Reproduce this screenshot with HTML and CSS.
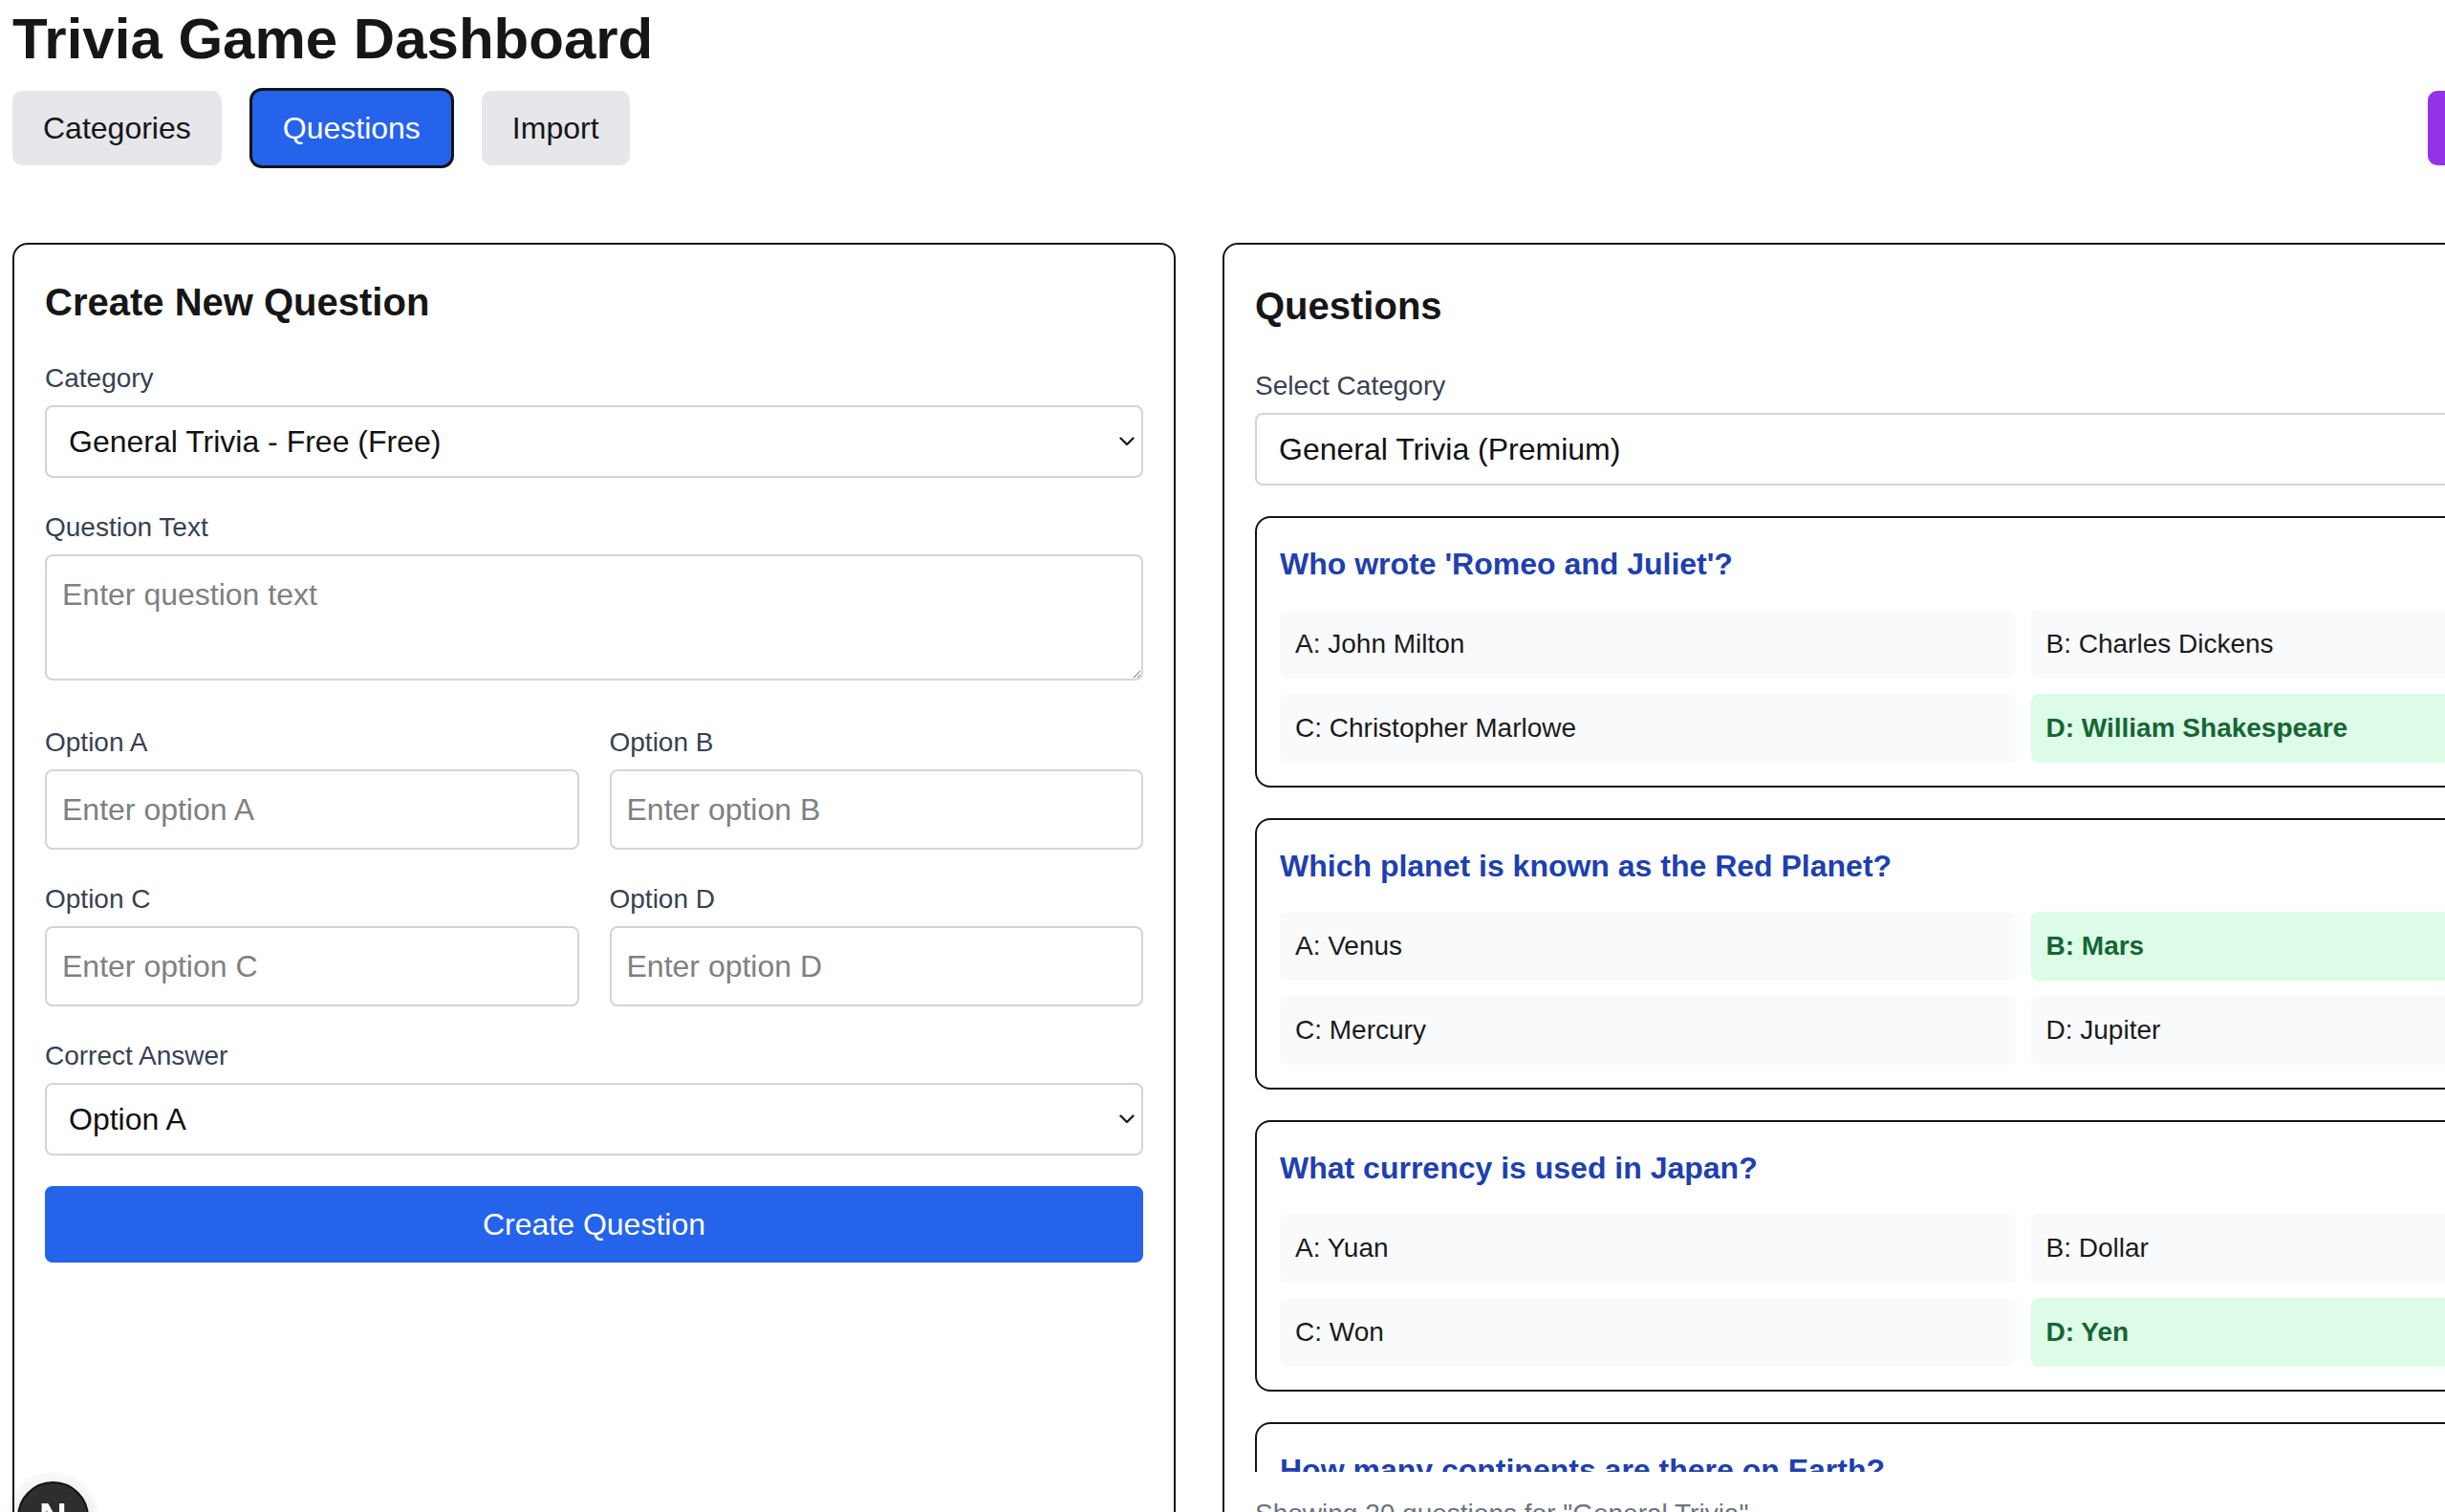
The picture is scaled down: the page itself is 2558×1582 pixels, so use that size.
FILE: index.html
```html
<!DOCTYPE html>
<html lang="en">
<head>
<meta charset="utf-8">
<title>Trivia Game Dashboard</title>
<link rel="stylesheet" href="styles.css">
</head>
<body>
<div class="page">
  <h1 class="title">Trivia Game Dashboard</h1>
  <nav class="tabs">
    <button class="tab">Categories</button>
    <button class="tab tab-active">Questions</button>
    <button class="tab">Import</button>
    <button class="tab tab-play">Play Trivia Game</button>
  </nav>

  <div class="columns">
    <section class="panel">
      <h2 class="panel-title">Create New Question</h2>

      <div class="field">
        <label class="label">Category</label>
        <div class="select-wrap">
          <select class="select"><option>General Trivia - Free (Free)</option></select>
          <svg class="chevron" width="16" height="10" viewBox="0 0 16 10"><polyline points="1.5,1.5 8,8 14.5,1.5"/></svg>
        </div>
      </div>

      <div class="field field-text">
        <label class="label">Question Text</label>
        <textarea class="textarea" rows="2" placeholder="Enter question text"></textarea>
      </div>

      <div class="field-grid">
        <div class="field">
          <label class="label">Option A</label>
          <input class="input" type="text" placeholder="Enter option A">
        </div>
        <div class="field">
          <label class="label">Option B</label>
          <input class="input" type="text" placeholder="Enter option B">
        </div>
        <div class="field">
          <label class="label">Option C</label>
          <input class="input" type="text" placeholder="Enter option C">
        </div>
        <div class="field">
          <label class="label">Option D</label>
          <input class="input" type="text" placeholder="Enter option D">
        </div>
      </div>

      <div class="field">
        <label class="label">Correct Answer</label>
        <div class="select-wrap">
          <select class="select"><option>Option A</option></select>
          <svg class="chevron" width="16" height="10" viewBox="0 0 16 10"><polyline points="1.5,1.5 8,8 14.5,1.5"/></svg>
        </div>
      </div>

      <button class="submit">Create Question</button>
    </section>

    <section class="panel">
      <div class="panel-head">
        <h2 class="panel-title panel-title-flush">Questions</h2>
      </div>

      <div class="field">
        <label class="label">Select Category</label>
        <div class="select-wrap">
          <select class="select"><option>General Trivia (Premium)</option></select>
          <svg class="chevron" width="16" height="10" viewBox="0 0 16 10"><polyline points="1.5,1.5 8,8 14.5,1.5"/></svg>
        </div>
      </div>

      <div class="q-list">
        <article class="q-card">
          <h3 class="q-title">Who wrote 'Romeo and Juliet'?</h3>
          <div class="q-options">
            <div class="q-opt">A: John Milton</div>
            <div class="q-opt">B: Charles Dickens</div>
            <div class="q-opt">C: Christopher Marlowe</div>
            <div class="q-opt q-opt-correct">D: William Shakespeare</div>
          </div>
        </article>
        <article class="q-card">
          <h3 class="q-title">Which planet is known as the Red Planet?</h3>
          <div class="q-options">
            <div class="q-opt">A: Venus</div>
            <div class="q-opt q-opt-correct">B: Mars</div>
            <div class="q-opt">C: Mercury</div>
            <div class="q-opt">D: Jupiter</div>
          </div>
        </article>
        <article class="q-card">
          <h3 class="q-title">What currency is used in Japan?</h3>
          <div class="q-options">
            <div class="q-opt">A: Yuan</div>
            <div class="q-opt">B: Dollar</div>
            <div class="q-opt">C: Won</div>
            <div class="q-opt q-opt-correct">D: Yen</div>
          </div>
        </article>
        <article class="q-card">
          <h3 class="q-title">How many continents are there on Earth?</h3>
          <div class="q-options">
            <div class="q-opt">A: 5</div>
            <div class="q-opt">B: 6</div>
            <div class="q-opt q-opt-correct">C: 7</div>
            <div class="q-opt">D: 8</div>
          </div>
        </article>
        <article class="q-card">
          <h3 class="q-title">What is the largest ocean on Earth?</h3>
          <div class="q-options">
            <div class="q-opt">A: Atlantic</div>
            <div class="q-opt">B: Indian</div>
            <div class="q-opt">C: Arctic</div>
            <div class="q-opt q-opt-correct">D: Pacific</div>
          </div>
        </article>
      </div>

      <p class="count">Showing 20 questions for "General Trivia"</p>
    </section>
  </div>
</div>

<div class="next-badge">N</div>
</body>
</html>
```

FILE: styles.css
```css
* {
  box-sizing: border-box;
}

html {
  overflow: hidden;
}

body {
  margin: 0;
  background: #ffffff;
  color: #111111;
  font-family: "Liberation Sans", Arial, Helvetica, sans-serif;
}

.page {
  width: 2954px;
  padding: 5px 0 0 13px;
}

.title {
  margin: 0 0 18px;
  font-size: 60px;
  line-height: 72px;
  font-weight: 700;
  color: #161616;
}

.tabs {
  display: flex;
  gap: 32px;
  margin-bottom: 81px;
}

.tab {
  height: 78px;
  padding: 0 32px;
  border: 0;
  border-radius: 10px;
  background: #e5e7eb;
  color: #161616;
  font-family: inherit;
  font-size: 32px;
  line-height: 78px;
}

.tab-active {
  background: #2563eb;
  color: #ffffff;
  box-shadow: 0 0 0 3px #141414;
}

.tab-play {
  margin-left: auto;
  width: 414px;
  background: #9333ea;
  color: #ffffff;
}

.columns {
  display: grid;
  grid-template-columns: 1217px 1675px;
  gap: 49px;
}

.panel {
  border: 2px solid #141414;
  border-radius: 16px;
  padding: 32px;
  min-height: 1400px;
}

.panel-title {
  margin: 0 0 32px;
  font-size: 40px;
  line-height: 56px;
  font-weight: 700;
  color: #161616;
}

.panel-head {
  display: flex;
  align-items: center;
  justify-content: space-between;
  height: 64px;
  margin-bottom: 32px;
}

.panel-title-flush {
  margin: 0;
}

.field {
  margin-bottom: 32px;
}

.field-text {
  margin-bottom: 45px;
}

.label {
  display: block;
  margin-bottom: 8px;
  font-size: 28px;
  line-height: 40px;
  color: #374151;
}

.select-wrap {
  position: relative;
}

.select {
  display: block;
  width: 100%;
  height: 76px;
  padding: 0 48px 0 23px;
  border: 2px solid #d1d5db;
  border-radius: 8px;
  background: #ffffff;
  color: #111111;
  font-family: inherit;
  font-size: 32px;
  -webkit-appearance: none;
  appearance: none;
}

.chevron {
  position: absolute;
  right: 9px;
  top: 33px;
  fill: none;
  stroke: #1c1c1c;
  stroke-width: 2.4;
  stroke-linecap: round;
  stroke-linejoin: round;
}

.textarea {
  display: block;
  width: 100%;
  height: 132px;
  padding: 16px;
  border: 2px solid #d1d5db;
  border-radius: 8px;
  font-family: inherit;
  font-size: 32px;
  line-height: 48px;
  color: #111111;
  resize: vertical;
}

.input {
  display: block;
  width: 100%;
  height: 84px;
  padding: 0 16px;
  border: 2px solid #d1d5db;
  border-radius: 8px;
  font-family: inherit;
  font-size: 32px;
  color: #111111;
}

.textarea::placeholder,
.input::placeholder {
  color: #808080;
}

.field-grid {
  display: grid;
  grid-template-columns: 1fr 1fr;
  column-gap: 32px;
}

.submit {
  display: block;
  width: 100%;
  height: 80px;
  border: 0;
  border-radius: 8px;
  background: #2563eb;
  color: #ffffff;
  font-family: inherit;
  font-size: 32px;
  line-height: 48px;
}

.q-list {
  height: 1000px;
  overflow-y: auto;
}

.q-card {
  border: 2px solid #141414;
  border-radius: 16px;
  padding: 24px;
  margin-bottom: 32px;
}

.q-title {
  margin: 0 0 24px;
  font-size: 32px;
  line-height: 48px;
  font-weight: 700;
  color: #1e40af;
}

.q-options {
  display: grid;
  grid-template-columns: 1fr 1fr;
  gap: 16px;
}

.q-opt {
  padding: 16px;
  border-radius: 8px;
  background: #f9fafb;
  font-size: 28px;
  line-height: 40px;
  color: #1a1a1a;
}

.q-opt-correct {
  background: #dcfce7;
  color: #166534;
  font-weight: 700;
}

.count {
  margin: 24px 0 0;
  font-size: 28px;
  line-height: 40px;
  color: #6b7280;
}

.next-badge {
  position: fixed;
  left: 18px;
  bottom: -43px;
  width: 75px;
  height: 75px;
  border-radius: 50%;
  border: 2px solid #111111;
  background: #2e2e2e;
  color: #ffffff;
  display: flex;
  align-items: center;
  justify-content: center;
  font-size: 40px;
  font-weight: 700;
  box-shadow: 0 0 0 10px rgba(0, 0, 0, 0.025), 0 6px 20px rgba(0, 0, 0, 0.12);
}
```
